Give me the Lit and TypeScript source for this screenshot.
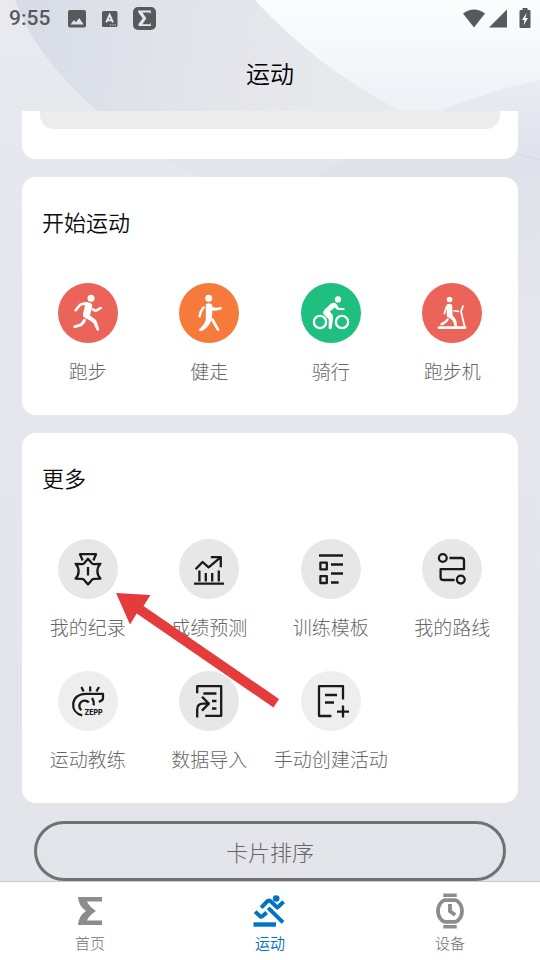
import { LitElement, html, svg, css, type SVGTemplateResult } from "lit";
import { customElement, property } from "lit/decorators.js";
import { classMap } from "lit/directives/class-map.js";

interface Tile {
  label: string;
  tone: string;
  icon: SVGTemplateResult;
}

const sports: Tile[] = [
  {
    label: "跑步",
    tone: "red",
    icon: svg`
      <circle cx="33" cy="15.2" r="3.5" fill="currentColor" stroke="none" />
      <path stroke-width="2.6" d="M17.7 27.2L22 22Q23.5 20.6 29 20.6" />
      <path fill="currentColor" stroke="none" d="M24.5 20Q29 18.3 32.6 20Q35 21.5 34 24.5L32 32.5Q37 35.5 38.8 38.5L41.2 46Q41 48.5 38.8 47.6L35.6 40.5Q33 37.5 27.5 35.2Q24 33.5 25 30.5L27 22.5Z" />
      <path stroke-width="2.6" d="M35 26.4Q36.8 28.3 39 27.2L42.7 25" />
      <path stroke-width="3" d="M26.4 37.4Q24.5 41.5 21.5 42.4L16.8 43.6" />`,
  },
  {
    label: "健走",
    tone: "orange",
    icon: svg`
      <circle cx="29.7" cy="15.2" r="3.5" fill="currentColor" stroke="none" />
      <path stroke-width="2.4" d="M24.6 24.4Q21.3 28 20.6 33.3" />
      <path fill="currentColor" stroke="none" d="M26.8 21.2Q30 19.2 32.6 21.2Q33.6 22.5 33.8 24.2Q37 25.2 41.6 24Q44 24.9 42 26.6Q37 28.4 33.2 27.4Q33.4 36 30.8 40.4Q28 45.4 22.2 48.2Q19.6 48.2 20.2 46Q26 41.4 26.8 36Z" />
      <path stroke-width="2.8" d="M33.4 36.8L36.4 42L39 46.6" />`,
  },
  {
    label: "骑行",
    tone: "green",
    icon: svg`
      <circle cx="37" cy="16.4" r="3.1" fill="currentColor" stroke="none" />
      <circle cx="19" cy="39" r="6.1" stroke-width="2.3" />
      <circle cx="41" cy="39" r="6.1" stroke-width="2.3" />
      <path fill="currentColor" stroke="none" d="M30.4 20.2Q34 18.8 35.5 21L38 24.9H42.8Q44.8 26 42.8 27.1H37Q36 27 33.8 24.5L28.8 28.6L31.8 32Q32.4 34 31.7 38L30.6 45.5Q29 47.2 27.6 45.2L27.8 36.5L22.4 31Q21.6 28.8 23.4 26.8Z" />`,
  },
  {
    label: "跑步机",
    tone: "red",
    icon: svg`
      <circle cx="27.6" cy="16.5" r="2.8" fill="currentColor" stroke="none" />
      <path stroke-width="2.8" d="M17 44.6H43" />
      <path stroke-width="1.8" d="M42.6 43.5L39 28.5L41 23.2" />
      <path stroke-width="1.6" d="M32 27.8L36.4 28.4" />
      <path stroke-width="1.8" d="M24.4 24L22.4 30.6" />
      <path fill="currentColor" stroke="none" d="M24.6 21.6Q28 19.6 30.2 22L30.6 32.4Q33.6 35 34.4 38L35.2 43.5H32.6L31 38.2Q29 35.6 24.8 33.6Z" />
      <path stroke-width="2.4" d="M25.6 36.4Q24.5 39 19.6 41.2" />`,
  },
];

const tools: Tile[] = [
  {
    label: "我的纪录",
    tone: "grey",
    icon: svg`
      <path d="M24.2 20.4L22 15.2H38L35.8 20.4" />
      <path d="M30 19.8L33.6 24Q34.4 25.3 36 25.2L42.4 24.8Q39.4 28 39.4 32.2Q39.4 36.400 42.4 39.6L36 39.8Q34.4 40 33.6 41.2L30 45.4L26.4 41.2Q25.6 40 24 39.8L17.6 39.6Q20.600 36.400 20.600 32.2Q20.600 28 17.6 24.8L24 25.2Q25.6 25.3 26.4 24Z" />
      <path d="M30 29.2V35.4" />`,
  },
  {
    label: "成绩预测",
    tone: "grey",
    icon: svg`
      <path d="M17.4 29.4L23.6 23L29.6 28.4L41.2 18.6M33 18.2H41.8V27" />
      <path stroke-linecap="butt" d="M20.4 31.5V42.4M26.8 34V42.4M33.2 34V42.4M39.8 31.5V42.4M15 44.7H45" />`,
  },
  {
    label: "训练模板",
    tone: "grey",
    icon: svg`
      <path stroke-linecap="butt" d="M18 16.5H42M30 25.5H42M30 34.5H42M30 43.5H37.6" />
      <path d="M19.4 23.6H25.8V30.4H19.4ZM19.4 37.2H25.8V44H19.4Z" />`,
  },
  {
    label: "我的路线",
    tone: "grey",
    icon: svg`
      <circle cx="20.8" cy="19" r="3.9" />
      <circle cx="38.8" cy="40.6" r="3.9" />
      <path d="M28.6 19H39.5Q42 19 42 21.5V30.2H18.6V38.6Q18.6 41 21 41H31.4" />`,
  },
  {
    label: "运动教练",
    tone: "pale",
    icon: svg`
      <path stroke-linecap="butt" d="M23.400 16L25.600 20.400M32.2 15.600V20.400M41 16L38.400 20.400" />
      <path stroke-linecap="butt" d="M24.200 44.4C17.8 42.8 14.6 38 15.2 32.6C16 26.6 21 22.8 27.6 22.8H45V27.2Q45 29.4 40.8 30.8" />
      <path stroke-linecap="butt" d="M30.8 31.4A5.4 5.4 0 1 0 23.400 39.200M34 27Q36.2 30 35.8 34.4" />
      <text x="26.4" y="43.8" class="mark">ZEPP</text>`,
  },
  {
    label: "数据导入",
    tone: "grey",
    icon: svg`
      <path d="M18.2 21V15.2H42.2V44.8H27.4M18.2 45.4V38.4Q18.2 32.6 24 32.6H29.6M23.8 26.6L29.8 32.6L23.8 38.8" />
      <path stroke-linecap="butt" d="M24.4 22.5H37.4M33 30H37.4M33 37.5H37.4" />`,
  },
  {
    label: "手动创建活动",
    tone: "pale",
    icon: svg`
      <path d="M29.2 45H18V15.2H42V27.4" />
      <path stroke-linecap="butt" d="M24 24H36M24 31.5H33M36 40.6H48M42 34.6V46.6" />`,
  },
];

const homeMark = "M6 4H30V8.600H15Q17.500 14 24 18Q17.500 22 15 27.400H30V32H6Q6.500 23 14 18Q6.500 13 6 4Z";
const noticeMark = "M6 4H29V10H28V7.500H14L21 18L14 28.500H28V26H29V32H7V28L14.500 18L7 8Z";

const tabs = [
  {
    label: "首页",
    active: false,
    icon: svg`<path fill="currentColor" d=${homeMark} />`,
  },
  {
    label: "运动",
    active: true,
    icon: svg`
      <circle cx="24.2" cy="5.5" r="3.3" fill="currentColor" />
      <g fill="none" stroke="currentColor" stroke-width="4" stroke-linejoin="round">
        <path d="M9.200 14.600L15.600 8Q17 6.900 18.400 8L25.400 14.600L31.600 8.800" />
        <path d="M3.200 18.600L8.200 23.400Q9.300 24 10.400 23.200L14.600 19.400" />
        <path d="M16.200 14.800L31 29.400" />
        <path d="M1.500 31.500H24" stroke-width="4.400" />
      </g>`,
  },
  {
    label: "设备",
    active: false,
    icon: svg`
      <path fill="currentColor" d="M11.300 .4H24.700V4H11.300ZM11.300 32H24.700V35.600H11.300Z" />
      <path fill="none" stroke="currentColor" stroke-width="3.800" stroke-linejoin="round"
        d="M13 7.200H23Q25 7.400 26.400 9Q30 12.600 30 18Q30 23.400 26.400 27Q25 28.600 23 28.800H13Q11 28.600 9.600 27Q6 23.400 6 18Q6 12.600 9.600 9Q11 7.400 13 7.200Z" />
      <path fill="none" stroke="currentColor" stroke-width="3.800" d="M18 11V18.200L23.200 22" />`,
  },
];

@customElement("sport-card")
class SportCard extends LitElement {
  @property() heading = "";
  @property({ attribute: false }) items: Tile[] = [];

  static styles = css`
    :host {
      display: block;
      background: #fff;
      border-radius: 14px;
      padding: 28px 5px 30px;
    }
    .heading {
      margin: 0 15px 46px;
      font-size: 22px;
      line-height: 32px;
      font-weight: 350;
      color: #0c0c0c;
    }
    .grid {
      display: grid;
      grid-template-columns: repeat(4, minmax(0, 1fr));
      row-gap: 30px;
    }
    .tile {
      display: flex;
      flex-direction: column;
      align-items: center;
      gap: 14px;
      padding: 0;
      border: 0;
      background: none;
      font: inherit;
      font-size: 19px;
      font-weight: 300;
      line-height: 28px;
      color: #666;
      white-space: nowrap;
      cursor: pointer;
    }
    .disc {
      width: 60px;
      height: 60px;
      border-radius: 50%;
      fill: none;
      stroke: currentColor;
      stroke-width: 2.2;
      stroke-linecap: round;
      stroke-linejoin: round;
      color: #fff;
    }
    .red { background: #eb6459; }
    .orange { background: #f67b3b; }
    .green { background: #1fc07f; }
    .grey { background: #e7e7e7; }
    .pale { background: #eee; }
    .grey, .pale {
      color: #1a1a1a;
      stroke-linecap: square;
      stroke-width: 2.3;
    }
    .mark {
      font: 800 7px "Inter", "Liberation Sans", sans-serif;
      fill: currentColor;
      stroke: none;
    }
  `;

  render() {
    return html`
      <h2 class="heading">${this.heading}</h2>
      <div class="grid">
        ${this.items.map(
          (item) => html`
            <button class="tile" type="button">
              <svg class="disc ${item.tone}" viewBox="0 0 60 60" aria-hidden="true">${item.icon}</svg>
              <span>${item.label}</span>
            </button>
          `,
        )}
      </div>
    `;
  }
}

@customElement("app-root")
class AppRoot extends LitElement {
  static styles = css`
    :host {
      position: relative;
      display: flex;
      flex-direction: column;
      min-height: 100vh;
      overflow: hidden;
      background: linear-gradient(#e9eaef, #e7e8ee 180px, #e3e4ea);
      font-family: "Noto Sans CJK SC", sans-serif;
    }
    .backdrop {
      position: absolute;
      top: 0;
      left: 0;
      width: 100%;
    }
    .status {
      position: relative;
      display: flex;
      align-items: center;
      height: 37px;
      padding: 0 9px;
      color: #58595c;
      font: 500 21px/37px Roboto, sans-serif;
    }
    .notices {
      display: flex;
      align-items: center;
      gap: 15px;
      margin-left: 17px;
    }
    .signals {
      display: flex;
      align-items: center;
      gap: 4px;
      margin-left: auto;
    }
    .cell { margin-right: 8px; }
    .title {
      position: relative;
      margin: 0;
      padding-bottom: 2px;
      font-size: 24px;
      line-height: 72px;
      font-weight: 350;
      text-align: center;
      color: #000;
    }
    .feed {
      position: relative;
      display: flex;
      flex-direction: column;
      flex: 1;
      gap: 18px;
      padding: 0 22px;
    }
    .previous {
      background: #fff;
      border-radius: 0 0 14px 14px;
      padding: 0 18px 30px;
    }
    .panel {
      height: 18px;
      border-radius: 0 0 14px 14px;
      background: #ececec;
    }
    .sort {
      height: 60px;
      margin: 0 12px;
      padding: 0;
      border: 3px solid #707175;
      border-radius: 30px;
      background: none;
      font: inherit;
      font-size: 22px;
      font-weight: 300;
      color: #66676b;
      cursor: pointer;
    }
    .pointer {
      position: absolute;
      top: 482px;
      left: 116px;
      pointer-events: none;
    }
    .tabs {
      position: relative;
      display: grid;
      grid-template-columns: repeat(3, 1fr);
      padding: 11px 0 6px;
      border-top: 1px solid #c9cace;
      background: #fff;
    }
    .tab {
      display: flex;
      flex-direction: column;
      align-items: center;
      gap: 3px;
      font-size: 15px;
      font-weight: 300;
      line-height: 22px;
      color: #707070;
      text-decoration: none;
    }
    .glyph { color: #8c8c8c; }
    .active, .active .glyph { color: #0073c6; }
    .active { font-weight: 350; }
  `;

  render() {
    return html`
      <svg class="backdrop" viewBox="0 0 540 320" aria-hidden="true">
        <defs>
          <linearGradient id="sweep" gradientUnits="userSpaceOnUse" x1="20" y1="60" x2="330" y2="100">
            <stop offset="0" stop-color="#d8dce6" />
            <stop offset=".5" stop-color="#e1e4ea" />
            <stop offset="1" stop-color="#e8e9ed" />
          </linearGradient>
          <linearGradient id="light" x1="0" y1="0" x2="0" y2="1">
            <stop offset="0" stop-color="#fcfdfe" />
            <stop offset="1" stop-color="#eceef5" />
          </linearGradient>
          <linearGradient id="wave" gradientUnits="userSpaceOnUse" x1="0" y1="80" x2="0" y2="320">
            <stop offset="0" stop-color="#eaecf4" />
            <stop offset=".35" stop-color="#dfe2ea" />
            <stop offset="1" stop-color="#e6e7ed" />
          </linearGradient>
        </defs>
        <path fill="url(#sweep)" d="M15 0Q35 56 97 111H400V0Z" />
        <path fill="#e3e5eb" d="M160 158Q180 170 205 180H317L343 158Z" />
        <path fill="url(#light)" d="M255 0Q315 66 400 111L440 131H540V0Z" />
        <path fill="url(#wave)" d="M317 177L343 159Q380 134 440 111Q486 92 540 80V320H317Z" />
        <path fill="none" stroke="#d5d9e2" d="M500 149L540 160" />
      </svg>

      <div class="status">
        <span>9:55</span>
        <div class="notices">
          <svg width="20" height="20" viewBox="0 0 20 20" aria-hidden="true">
            <rect x="1" y="1" width="18" height="17.500" rx="2" fill="currentColor" />
            <path fill="#e0e3ea" d="M3.500 15.500L7 11L9 13.200L12.200 9L16.600 15.500Z" />
          </svg>
          <svg width="16" height="18" viewBox="0 0 16 18" aria-hidden="true">
            <rect y="1" width="15.500" height="16" rx="1.500" fill="currentColor" />
            <path fill="none" stroke="#e5e7ec" stroke-width="1.900" d="M4.200 12.400L7.600 4.800L11 12.400M5.600 10.200H9.600" />
            <path stroke="#e5e7ec" stroke-width="1.200" stroke-dasharray="1.200 1.200" d="M8 15H14" />
          </svg>
          <svg width="23" height="23" viewBox="0 0 23 23" aria-hidden="true">
            <rect width="23" height="23" rx="5" fill="currentColor" />
            <path fill="#e5e7ec" transform="translate(1.600 1.200) scale(.56)" d=${noticeMark} />
          </svg>
        </div>
        <div class="signals">
          <svg width="22" height="20" viewBox="0 0 22 20" aria-hidden="true">
            <path fill="currentColor" d="M0 4.500Q11 -3.500 22 4.500L11 18.500Z" />
          </svg>
          <svg class="cell" width="18" height="20" viewBox="0 0 18 20" aria-hidden="true">
            <path fill="currentColor" d="M0 18.500L18 .5V18.500Z" />
          </svg>
          <svg width="12" height="22" viewBox="0 0 12 22" aria-hidden="true">
            <path fill="currentColor" d="M3.500 0H8.500V2H10.500Q11.500 2 11.500 3V19Q11.500 20 10.500 20H1.500Q.5 20 .5 19V3Q.5 2 1.500 2H3.500Z" />
            <path fill="#f7f8fb" d="M7.500 5L3 12H5.500L4.500 17.500L9 10H6.500Z" />
          </svg>
        </div>
      </div>
      <h1 class="title">运动</h1>

      <main class="feed">
        <div class="previous"><div class="panel"></div></div>
        <sport-card heading="开始运动" .items=${sports}></sport-card>
        <sport-card heading="更多" .items=${tools}></sport-card>
        <button class="sort" type="button">卡片排序</button>
        <svg class="pointer" width="164" height="115" viewBox="0 0 164 115" aria-hidden="true">
          <path fill="#e43c3c" d="M0 0L34.500 2L27.500 13L163 106L157.500 114.500L20.700 20.500L14 31.500Z" />
        </svg>
      </main>

      <nav class="tabs">
        ${tabs.map(
          (tab) => html`
            <a class=${classMap({ tab: true, active: tab.active })} href="#">
              <svg class="glyph" width="36" height="36" viewBox="0 0 36 36" aria-hidden="true">${tab.icon}</svg>
              <span>${tab.label}</span>
            </a>
          `,
        )}
      </nav>
    `;
  }
}
